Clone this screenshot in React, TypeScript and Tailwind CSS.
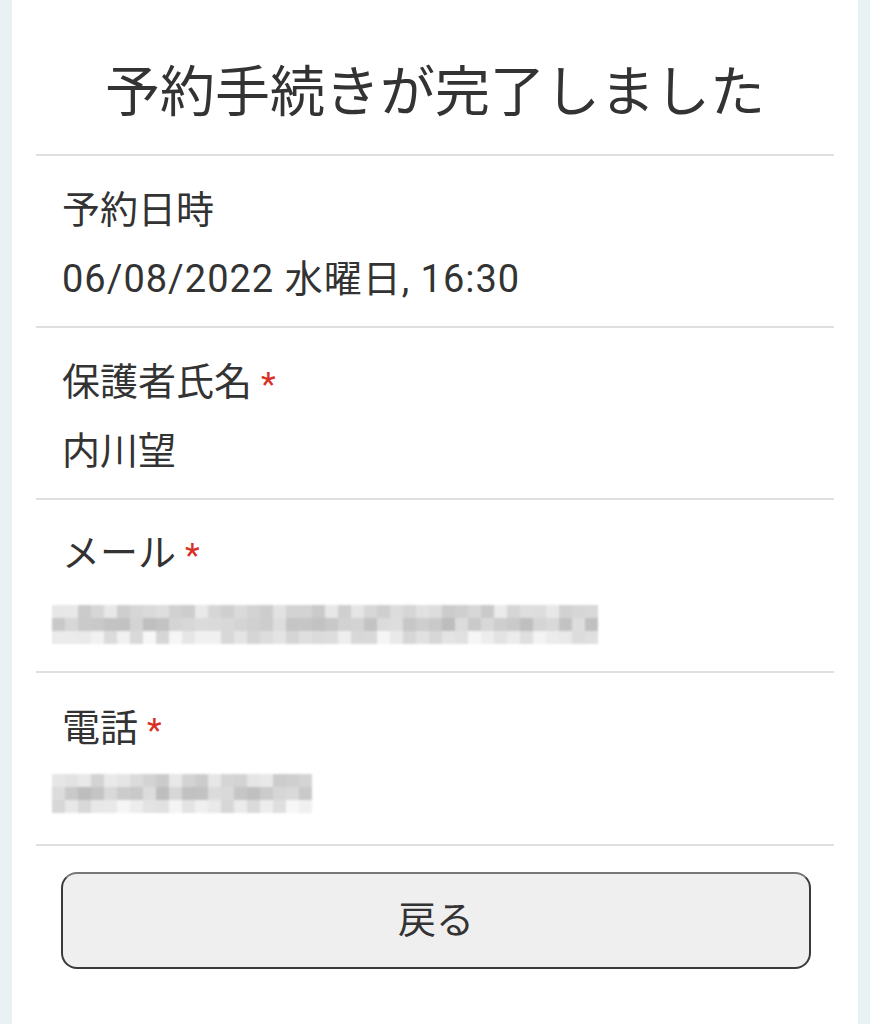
import React from "react";

const font = { fontFamily: 'Roboto, "Noto Sans CJK JP", "Noto Sans", sans-serif' };

function shades(n: number, seed: number): number[] {
  const out: number[] = [];
  let s = seed;
  for (let i = 0; i < n; i++) {
    s = (s * 9301 + 49297) % 233280;
    out.push(s / 233280);
  }
  return out;
}

function Mosaic({ cols, seed }: { cols: number; seed: number }) {
  const rows = [0, 1, 2];
  const vals = shades(cols * 3, seed);
  return (
    <div className="flex flex-col blur-[1px]">
      {rows.map((r) => (
        <div key={r} className="flex">
          {Array.from({ length: cols }).map((_, c) => {
            const v = vals[r * cols + c];
            const base = r === 1 ? 205 : r === 0 ? 218 : 230;
            const g = Math.round(base + (v - 0.5) * 34);
            return (
              <div
                key={c}
                className="w-[13px] h-[13px]"
                style={{ backgroundColor: `rgb(${g},${g},${g})` }}
              />
            );
          })}
        </div>
      ))}
    </div>
  );
}

function Star() {
  return <span className="ml-[9px] text-[34px] leading-none text-[#d93025] relative top-[2px]">*</span>;
}

export default function App() {
  return (
    <div className="min-h-[1024px] bg-[#e9f1f3] px-[12px]" style={font}>
      <div className="bg-white min-h-[1024px] px-[24px] text-[#333333]">
        <div className="h-[156px] pt-[30px] border-b-2 border-[#dfdfdf] flex items-center justify-center">
          <h1 className="text-[55px] leading-none font-normal">予約手続きが完了しました</h1>
        </div>

        <div className="h-[172px] border-b-2 border-[#dfdfdf] pl-[26px] pt-[32px]">
          <div className="text-[38px] leading-[44px] flex items-center">予約日時</div>
          <div className="mt-[25px] text-[38px] leading-[44px] tracking-[1px]">06/08/2022 水曜日, 16:30</div>
        </div>

        <div className="h-[172px] border-b-2 border-[#dfdfdf] pl-[26px] pt-[32px]">
          <div className="text-[38px] leading-[44px] flex items-center">保護者氏名<Star /></div>
          <div className="mt-[25px] text-[38px] leading-[44px]">内川望</div>
        </div>

        <div className="h-[173px] border-b-2 border-[#dfdfdf] pl-[16px] pt-[31px]">
          <div className="pl-[10px] text-[38px] leading-[44px] flex items-center">メール<Star /></div>
          <div className="mt-[30px]">
            <Mosaic cols={42} seed={17} />
          </div>
        </div>

        <div className="h-[173px] border-b-2 border-[#dfdfdf] pl-[16px] pt-[33px]">
          <div className="pl-[10px] text-[38px] leading-[44px] flex items-center">電話<Star /></div>
          <div className="mt-[24px]">
            <Mosaic cols={20} seed={91} />
          </div>
        </div>

        <div className="pt-[26px] pl-[25px] pr-[23px]">
          <button className="w-full h-[97px] rounded-[16px] border-2 border-[#3a3a3a] border-t-[#777777] bg-[#efefef] text-[38px] text-[#333333]" style={font}>
            戻る
          </button>
        </div>
      </div>
    </div>
  );
}
